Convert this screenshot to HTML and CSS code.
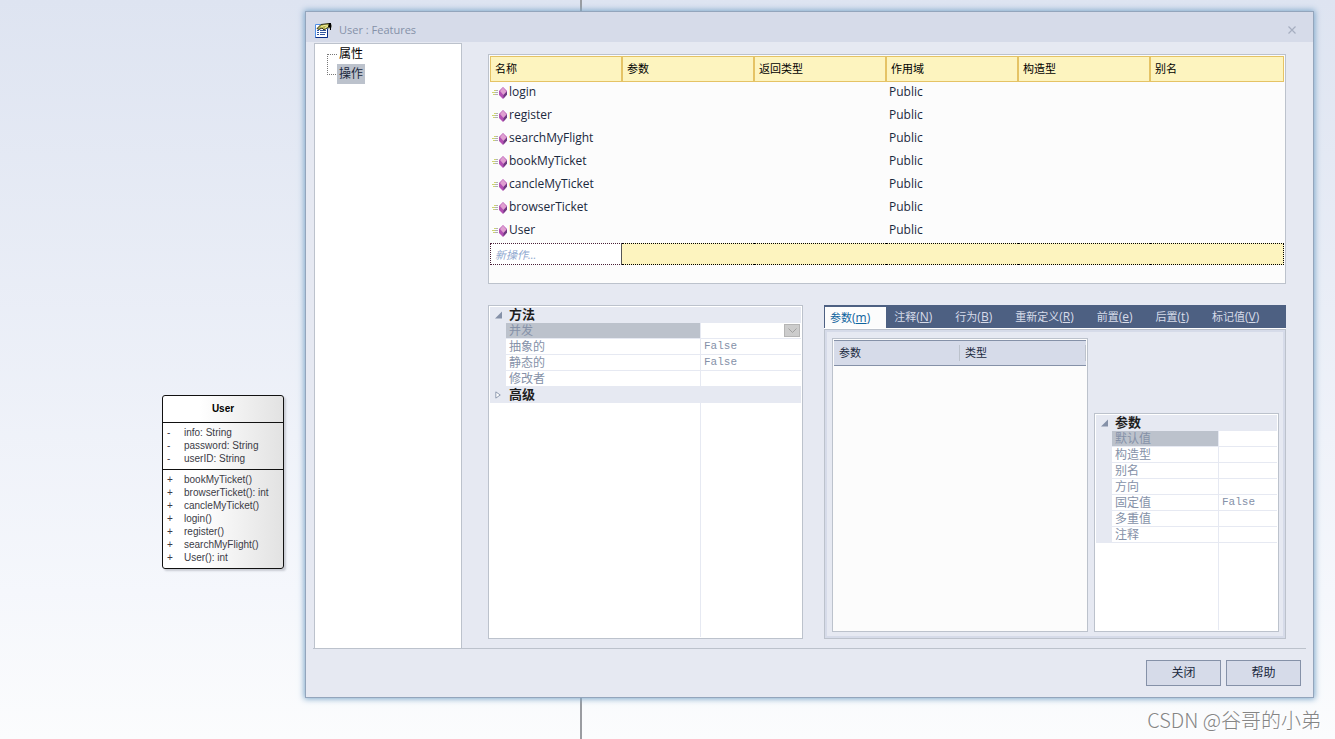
FILE: index.html
```html
<!DOCTYPE html>
<html lang="zh-CN">
<head>
<meta charset="utf-8">
<title>User : Features</title>
<link rel="stylesheet" href="styles.css">
</head>
<body>
<svg class="symbols" aria-hidden="true">
  <symbol id="operation" viewBox="0 0 16 12">
    <g shape-rendering="crispEdges">
      <path d="M2 3.500h2M0 5.500h3M1 7.500h2" stroke="#cdd56e"/>
      <path d="M4 3.500h2M3 5.500h3M3 7.500h3" stroke="#b0b0b4"/>
    </g>
    <path d="M11 0l4 4v3.500L11 12 7 8V4z" fill="#b44fb4"/>
    <path d="M11 .5l3.500 4L11.500 8l-3.500-4z" fill="#dfa0d0"/>
    <path d="M15 4.500v3L11.500 11.500V8z" fill="#6f3b80"/>
  </symbol>
</svg>
<main class="desktop">
  <div class="lifeline"></div>

  <section class="uml">
    <h2 class="uml-name">User</h2>
    <ul class="uml-part">
      <li><span>-</span>info: String</li>
      <li><span>-</span>password: String</li>
      <li><span>-</span>userID: String</li>
    </ul>
    <ul class="uml-part">
      <li><span>+</span>bookMyTicket()</li>
      <li><span>+</span>browserTicket(): int</li>
      <li><span>+</span>cancleMyTicket()</li>
      <li><span>+</span>login()</li>
      <li><span>+</span>register()</li>
      <li><span>+</span>searchMyFlight()</li>
      <li><span>+</span>User(): int</li>
    </ul>
  </section>

  <section class="dialog" role="dialog" aria-labelledby="dialog-title">
    <header class="titlebar">
      <svg class="title-icon" viewBox="0 0 17 15" aria-hidden="true">
        <path d="M.5 1.500h12v13H.5z" fill="#fff" stroke="#4f8fe6"/>
        <path d="M12.500 6v8.500H.5" fill="none" stroke="#0c2f86"/>
        <path d="M2 7.500h2M5 7.500h6M2 9.500h2M5 9.500h6M2 11.500h2M5 11.500h5" stroke="#31569f"/>
        <path d="M2 5.500l4-4 8-1 2 1v3l-4 .5-3 2-2-2-3 1.500z" fill="#b9b652" stroke="#33331d"/>
        <path d="M6 4l3-1.500 4 .5-3 2" fill="none" stroke="#f2f0a0"/>
        <path d="M14 0h2v7h-1V4h-2z" fill="#000"/>
      </svg>
      <h1 id="dialog-title">User : Features</h1>
      <button class="close" type="button" aria-label="Close">
        <svg viewBox="0 0 8 8"><path d="M.5.5l7 7M7.500.5l-7 7" stroke="#a6aec0" stroke-width="1.200"/></svg>
      </button>
    </header>

    <div class="body">
      <nav class="tree">
        <ul>
          <li><button type="button">属性</button></li>
          <li><button type="button" class="selected">操作</button></li>
        </ul>
      </nav>

      <div class="content">
        <div class="operations">
          <table>
            <thead>
              <tr><th>名称</th><th>参数</th><th>返回类型</th><th>作用域</th><th>构造型</th><th>别名</th></tr>
            </thead>
            <tbody>
              <tr><td><svg><use href="#operation"/></svg>login</td><td></td><td></td><td>Public</td><td></td><td></td></tr>
              <tr><td><svg><use href="#operation"/></svg>register</td><td></td><td></td><td>Public</td><td></td><td></td></tr>
              <tr><td><svg><use href="#operation"/></svg>searchMyFlight</td><td></td><td></td><td>Public</td><td></td><td></td></tr>
              <tr><td><svg><use href="#operation"/></svg>bookMyTicket</td><td></td><td></td><td>Public</td><td></td><td></td></tr>
              <tr><td><svg><use href="#operation"/></svg>cancleMyTicket</td><td></td><td></td><td>Public</td><td></td><td></td></tr>
              <tr><td><svg><use href="#operation"/></svg>browserTicket</td><td></td><td></td><td>Public</td><td></td><td></td></tr>
              <tr><td><svg><use href="#operation"/></svg>User</td><td></td><td></td><td>Public</td><td></td><td></td></tr>
              <tr class="new"><td><input type="text" placeholder="新操作..." aria-label="新操作"></td><td></td><td></td><td></td><td></td><td></td></tr>
            </tbody>
          </table>
        </div>

        <div class="details">
          <div class="props methods">
            <table>
              <colgroup><col class="gutter"><col class="name"><col></colgroup>
              <tbody>
                <tr class="group"><td><svg viewBox="0 0 7 7"><path d="M7 0v7H0z" fill="#8591a8"/></svg></td><th colspan="2">方法</th></tr>
                <tr class="current"><td></td><th>并发</th><td><button class="drop" type="button" aria-label="并发"><svg viewBox="0 0 9 5"><path d="M.5.5l4 4 4-4" fill="none" stroke="#a0a0a0"/></svg></button></td></tr>
                <tr><td></td><th>抽象的</th><td>False</td></tr>
                <tr><td></td><th>静态的</th><td>False</td></tr>
                <tr><td></td><th>修改者</th><td></td></tr>
                <tr class="group"><td><svg viewBox="0 0 7 9"><path d="M.5 1v7l5-3.500z" fill="#fff" stroke="#8591a8"/></svg></td><th colspan="2">高级</th></tr>
              </tbody>
            </table>
            <div class="filler"></div>
          </div>

          <div class="tabs">
            <div class="tablist" role="tablist">
              <button type="button" role="tab" aria-selected="true">参数<span>(<u>m</u>)</span></button>
              <button type="button" role="tab">注释<span>(<u>N</u>)</span></button>
              <button type="button" role="tab">行为<span>(<u>B</u>)</span></button>
              <button type="button" role="tab">重新定义<span>(<u>R</u>)</span></button>
              <button type="button" role="tab">前置<span>(<u>e</u>)</span></button>
              <button type="button" role="tab">后置<span>(<u>t</u>)</span></button>
              <button type="button" role="tab">标记值<span>(<u>V</u>)</span></button>
            </div>
            <div class="tabpanel" role="tabpanel">
              <div class="params">
                <table><thead><tr><th><span>参数</span></th><th><span>类型</span></th></tr></thead></table>
              </div>
              <div class="props param">
                <table>
                  <colgroup><col class="gutter"><col class="name"><col></colgroup>
                  <tbody>
                    <tr class="group"><td><svg viewBox="0 0 7 7"><path d="M7 0v7H0z" fill="#8591a8"/></svg></td><th colspan="2">参数</th></tr>
                    <tr class="current"><td></td><th>默认值</th><td></td></tr>
                    <tr><td></td><th>构造型</th><td></td></tr>
                    <tr><td></td><th>别名</th><td></td></tr>
                    <tr><td></td><th>方向</th><td></td></tr>
                    <tr><td></td><th>固定值</th><td>False</td></tr>
                    <tr><td></td><th>多重值</th><td></td></tr>
                    <tr><td></td><th>注释</th><td></td></tr>
                  </tbody>
                </table>
                <div class="filler"></div>
              </div>
            </div>
          </div>
        </div>
      </div>
    </div>

    <footer class="actions">
      <button type="button">关闭</button>
      <button type="button">帮助</button>
    </footer>
  </section>

  <p class="watermark">CSDN @谷哥的小弟</p>
</main>
</body>
</html>
```
FILE: styles.css
```css
* { box-sizing: border-box; }

body {
  margin: 0;
  font: 12px/16px "Open Sans", "Noto Sans CJK SC", sans-serif;
  color: #1b293e;
}

button, input { font: inherit; color: inherit; }
h1, h2, ul, p { margin: 0; padding: 0; font-weight: 400; }
ul { list-style: none; }
table { width: 100%; border-collapse: collapse; table-layout: fixed; }
th, td { padding: 0; text-align: left; font-weight: 400; white-space: nowrap; }
.symbols { display: none; }

.desktop {
  position: relative;
  height: 100vh;
  min-height: 600px;
  min-width: 1100px;
  overflow: hidden;
  background: linear-gradient(#dee4f1, #f5f7fc 80%, #fbfcfd);
}

.lifeline {
  position: absolute;
  top: 0;
  bottom: 0;
  left: 580px;
  width: 2px;
  background: #9a9ca1;
}

/* Class diagram element */
.uml {
  position: absolute;
  left: 162px;
  top: 395px;
  width: 122px;
  border: 1px solid #111;
  border-radius: 3px;
  background: linear-gradient(90deg, #fff 30%, #e2e2e2);
  box-shadow: 2px 2px 2px #c9ccd4;
  font: 10px/13px "Liberation Sans", sans-serif;
  color: #3b3b46;
}
.uml-name {
  font-size: 10px;
  font-weight: 700;
  line-height: 26px;
  padding-top: 0;
  text-align: center;
  color: #000;
}
.uml-part { border-top: 1px solid #111; padding: 3px 4px 4px; }
.uml-part li { display: flex; }
.uml-part span { width: 17px; }

/* Dialog frame */
.dialog {
  position: absolute;
  inset: 11px 21px 41px 305px;
  display: flex;
  flex-direction: column;
  border: 1px solid #93a5bc;
  background: #e6e9f2;
  box-shadow: 0 0 6px 1px #7fa9cb;
}
.titlebar {
  display: flex;
  align-items: center;
  height: 30px;
  padding: 6px 17px 0 9px;
  background: #d6dbe9;
  color: #8591a8;
}
.title-icon { width: 17px; height: 15px; margin-right: 7px; }
.titlebar h1 { flex: 1; font-size: 11px; }
.close { display: flex; padding: 0; border: 0; background: none; }
.close svg { width: 8px; height: 8px; }

.body {
  flex: 1;
  min-height: 0;
  display: flex;
  gap: 26px;
  margin: 1px 7px 0;
  padding-left: 1px;
  border-bottom: 1px solid #bcc2cc;
}

.tree {
  width: 148px;
  border: 1px solid #bcc2cc;
  border-bottom: 0;
  background: #fff;
  color: #000;
}
.tree li { position: relative; display: flex; padding-left: 22px; height: 20px; align-items: center; }
.tree li::before {
  content: "";
  position: absolute;
  left: 12px;
  top: 10px;
  width: 9px;
  height: 20px;
  border: 1px dotted #777;
  border-width: 1px 0 0 1px;
}
.tree li:last-child::before { height: 1px; border-left: 0; }
.tree button { padding: 0 2px; border: 0; background: none; height: 20px; line-height: 20px; }
.tree .selected { background: #bcc2cc; color: #1b293e; }

.content {
  flex: 1;
  min-width: 0;
  display: flex;
  flex-direction: column;
  gap: 21px;
  padding: 11px 20px 9px 0;
}

/* Operation list */
.operations {
  height: 230px;
  padding: 1px;
  border: 1px solid #bcc2cc;
  background: #fcfcfc;
}
.operations table { border-collapse: separate; border-spacing: 0; }
.operations th {
  width: 132px;
  height: 26px;
  padding-left: 4px;
  border: 1px solid #e5c365;
  background: #fdf4bf;
  font-size: 11px;
  color: #000;
}
.operations th:last-child { width: auto; }
.operations td { height: 23px; padding: 0 0 3px 3px; }
.operations td:first-child { padding-left: 2px; }
.operations svg { width: 16px; height: 12px; margin-right: 1px; vertical-align: -3px; }
.operations .new td {
  height: 22px;
  padding: 0;
  border: 1px dotted #000;
  border-width: 1px 0;
  background: #fdf4bf;
}
.operations .new td:first-child { border: 1px dotted #4a2038; border-right: 1px solid #555; background: #fff; }
.operations .new td:last-child { border-right-width: 1px; }
.operations input {
  display: block;
  width: 100%;
  height: 20px;
  padding: 0 4px;
  border: 0;
  background: none;
  font-size: 11px;
  font-style: italic;
}
.operations input::placeholder { color: #8fa9d0; opacity: 1; }

.details {
  flex: 1;
  min-height: 0;
  display: grid;
  grid-template-columns: minmax(0, 315fr) minmax(0, 462fr);
  gap: 21px;
}

/* Property grids */
.props {
  display: flex;
  flex-direction: column;
  padding: 1px;
  border: 1px solid #bcc2cc;
  background: #fff;
  color: #8591a8;
}
.methods { --name: 194px; }
.param { margin-top: 75px; --name: 106px; }
.gutter { width: 16px; }
.name { width: var(--name); }
.props table { border-collapse: separate; border-spacing: 0; }
.props td, .props th { height: 16px; line-height: 15px; border-bottom: 1px solid #e6e9f2; }
.props th { padding-left: 3px; }
.props td:first-child { background: #e6e9f2; line-height: 0; text-align: center; }
.props td:last-child {
  padding-left: 3px;
  border-left: 1px solid #e6e9f2;
  font-family: "Liberation Mono", monospace;
  font-size: 11px;
}
.props .group th { background: #e6e9f2; color: #1e1e1e; font-size: 13px; font-weight: 700; }
.props .group svg { width: 7px; height: 8px; }
.props .current th { background: #bcc2cc; }
.drop {
  display: flex;
  align-items: center;
  justify-content: center;
  width: 16px;
  height: 13px;
  margin: 0 1px 0 auto;
  padding: 0;
  border: 1px solid #b5b5b5;
  background: #ccc;
}
.drop svg { width: 9px; height: 5px; }
.filler { flex: 1; margin-left: calc(16px + var(--name)); border-left: 1px solid #e6e9f2; }

/* Tabbed parameter pane */
.tabs { display: flex; flex-direction: column; }
.tablist {
  display: flex;
  height: 24px;
  padding: 2px 0 0 1px;
  border-bottom: 1px solid #fff;
  background: #4d6082;
}
.tablist button {
  padding: 0 15px 1px 8px;
  border: 0;
  background: none;
  color: #d6dbe9;
  font-size: 11px;
  line-height: 20px;
  white-space: nowrap;
}
.tablist span { font-size: 12px; }
.tablist [aria-selected] { padding: 1px 16px 0 5px; background: #fcfcfc; color: #0e639c; }
.tabpanel {
  flex: 1;
  display: grid;
  grid-template-columns: minmax(0, 256fr) minmax(0, 185fr);
  gap: 6px;
  padding: 8px 6px 6px 7px;
  border: 1px solid #bcc2cc;
  box-shadow: inset 0 0 0 2px #d6dbe9;
}
.params { padding: 1px; border: 1px solid #bcc2cc; background: #fcfcfc; }
.params table { border-collapse: separate; border-spacing: 0; }
.params th {
  height: 26px;
  border: 1px solid #8591a8;
  border-width: 1px 0;
  background: #d6dbe9;
  font-size: 11px;
}
.params span { display: block; padding-left: 5px; border-right: 1px solid #bcc2cc; }

/* Dialog buttons */
.actions { display: flex; justify-content: flex-end; gap: 5px; padding: 11px 12px 11px; }
.actions button {
  width: 75px;
  height: 26px;
  padding: 0;
  border: 1px solid #8591a8;
  background: #d6dbe9;
}

.watermark {
  position: absolute;
  right: 14px;
  bottom: 5px;
  font: 300 20px/28px "Noto Sans CJK SC", sans-serif;
  color: #858585;
  text-shadow: 1px 1px 0 #fff;
}
```
